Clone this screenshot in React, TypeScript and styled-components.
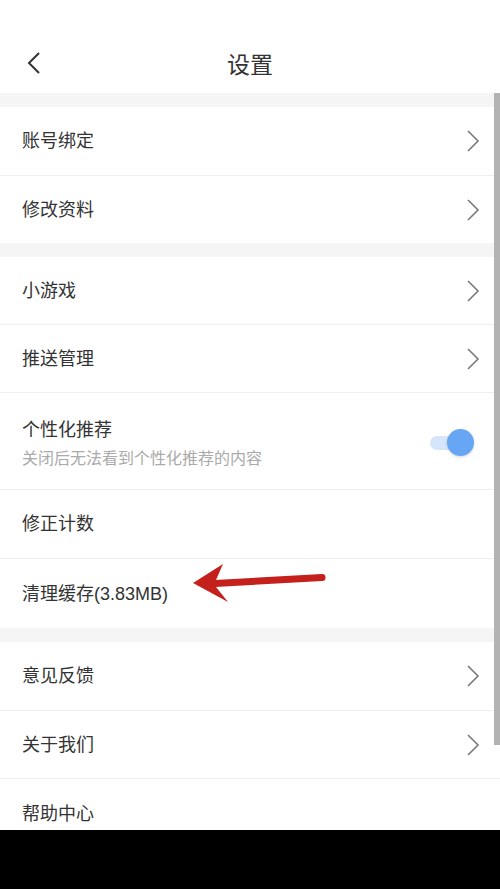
import React from "react";
import styled, { createGlobalStyle } from "styled-components";

const Global = createGlobalStyle`
  html, body { margin: 0; padding: 0; background: #000; }
  body { font-family: "Liberation Sans", "Noto Sans CJK SC", sans-serif; }
  * { box-sizing: border-box; }
`;

const Screen = styled.div`
  width: 500px;
  height: 889px;
  display: flex;
  flex-direction: column;
  background: #000;
`;

const Viewport = styled.div`
  position: relative;
  height: 830px;
  overflow: hidden;
  background: #f5f5f5;
  display: flex;
  flex-direction: column;
`;

const Header = styled.header`
  height: 93px;
  flex-shrink: 0;
  background: #fff;
  padding-top: 35px;
  display: flex;
  align-items: flex-start;
  justify-content: center;
`;

const HeaderInner = styled.div`
  height: 55px;
  width: 100%;
  display: flex;
  align-items: center;
  justify-content: center;
  position: relative;
`;

const BackButton = styled.button`
  position: absolute;
  left: 22px;
  top: 50%;
  transform: translateY(-50%);
  border: 0;
  background: transparent;
  padding: 0;
  width: 24px;
  height: 28px;
  display: flex;
  align-items: center;
  justify-content: center;
`;

const Title = styled.h1`
  margin: 0;
  font-size: 23px;
  font-weight: 400;
  color: #333;
`;

const Group = styled.section`
  background: #fff;
  margin-top: 14px;
  display: flex;
  flex-direction: column;
  flex-shrink: 0;
`;

const Row = styled.div<{ $h: number; $last?: boolean }>`
  position: relative;
  height: ${(p) => p.$h}px;
  flex-shrink: 0;
  display: flex;
  align-items: center;
  justify-content: space-between;
  padding: 0 20px 0 22px;
  border-bottom: ${(p) => (p.$last ? "none" : "1px solid #efefef")};
`;

const Label = styled.span`
  font-size: 18px;
  color: #333;
  line-height: 24px;
`;

const TextCol = styled.div`
  display: flex;
  flex-direction: column;
  gap: 7px;
  padding-top: 4px;
`;

const SubLabel = styled.span`
  font-size: 16px;
  color: #aaa;
  line-height: 20px;
`;

const Toggle = styled.div`
  position: relative;
  width: 44px;
  height: 28px;
  margin-right: 6px;
  margin-top: 4px;
  display: flex;
  align-items: center;
`;

const Track = styled.div`
  width: 38px;
  height: 14px;
  border-radius: 7px;
  background: #d5e6fb;
`;

const Knob = styled.div`
  position: absolute;
  right: 0;
  top: 0;
  width: 27px;
  height: 27px;
  border-radius: 50%;
  background: #66a6f5;
  box-shadow: 0 1px 3px rgba(0, 0, 0, 0.18);
`;

const Scrollbar = styled.div`
  position: absolute;
  right: 0;
  top: 93px;
  width: 6px;
  height: 652px;
  background: #b3b3b3;
`;

const ArrowMark = styled.svg`
  position: absolute;
  left: 185px;
  top: 0;
`;

const BottomBar = styled.div`
  flex: 1;
  background: #000;
`;

const Chevron = () => (
  <svg width="14" height="24" viewBox="0 0 14 24">
    <polyline points="2,2 12,12 2,22" fill="none" stroke="#7a7a7a" strokeWidth="1.6" />
  </svg>
);

const Back = () => (
  <svg width="16" height="24" viewBox="0 0 16 24">
    <polyline points="13,2 3,12 13,22" fill="none" stroke="#333" strokeWidth="2" />
  </svg>
);

const Arrow = () => (
  <ArrowMark width="150" height="50" viewBox="0 0 150 50">
    <line x1="30" y1="24.5" x2="137" y2="18.5" stroke="#c4211d" strokeWidth="7" strokeLinecap="round" />
    <polygon points="8,24 38,5 31,21 31,28 43,43" fill="#c4211d" />
  </ArrowMark>
);

export default function App() {
  return (
    <Screen>
      <Global />
      <Viewport>
        <Header>
          <HeaderInner>
            <BackButton aria-label="返回">
              <Back />
            </BackButton>
            <Title>设置</Title>
          </HeaderInner>
        </Header>

        <Group>
          <Row $h={69}>
            <Label>账号绑定</Label>
            <Chevron />
          </Row>
          <Row $h={67} $last>
            <Label>修改资料</Label>
            <Chevron />
          </Row>
        </Group>

        <Group>
          <Row $h={68}>
            <Label>小游戏</Label>
            <Chevron />
          </Row>
          <Row $h={68}>
            <Label>推送管理</Label>
            <Chevron />
          </Row>
          <Row $h={97}>
            <TextCol>
              <Label>个性化推荐</Label>
              <SubLabel>关闭后无法看到个性化推荐的内容</SubLabel>
            </TextCol>
            <Toggle>
              <Track />
              <Knob />
            </Toggle>
          </Row>
          <Row $h={69}>
            <Label>修正计数</Label>
          </Row>
          <Row $h={69} $last>
            <Label>清理缓存(3.83MB)</Label>
            <Arrow />
          </Row>
        </Group>

        <Group>
          <Row $h={69}>
            <Label>意见反馈</Label>
            <Chevron />
          </Row>
          <Row $h={68}>
            <Label>关于我们</Label>
            <Chevron />
          </Row>
          <Row $h={69} $last>
            <Label>帮助中心</Label>
          </Row>
        </Group>

        <Scrollbar />
      </Viewport>
      <BottomBar />
    </Screen>
  );
}
